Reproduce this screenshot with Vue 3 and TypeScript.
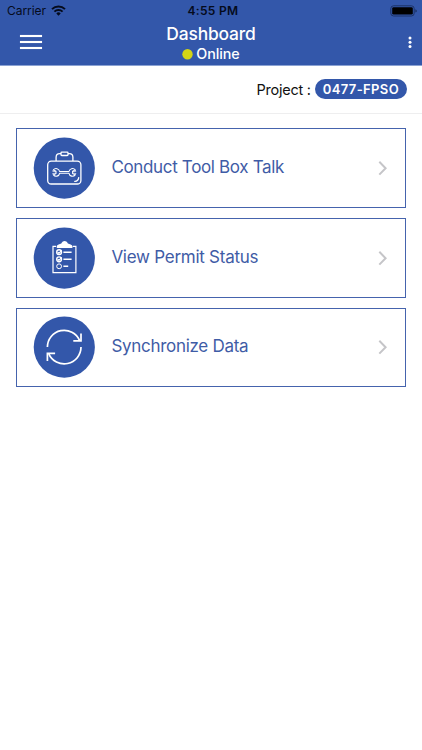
<script setup lang="ts">
interface MenuItem {
  label: string
  icon: 'toolbox' | 'permit' | 'sync'
}

const items: MenuItem[] = [
  { label: 'Conduct Tool Box Talk', icon: 'toolbox' },
  { label: 'View Permit Status', icon: 'permit' },
  { label: 'Synchronize Data', icon: 'sync' },
]
</script>

<template>
  <div class="screen">
    <header class="header">
      <div class="status">
        <div class="carrier">
          <span>Carrier</span>
          <svg class="wifi" width="15" height="11" viewBox="0 0 15 11" fill="none" stroke="#050b1c">
            <path d="M1 4.1a9.3 9.3 0 0 1 13 0" stroke-width="2" />
            <path d="M3.4 6.6a5.9 5.9 0 0 1 8.2 0" stroke-width="1.9" />
            <path d="M5.3 8.4a3.2 3.2 0 0 1 4.4 0L7.5 10.7Z" fill="#050b1c" stroke="none" />
          </svg>
        </div>
        <span class="time">4:55 PM</span>
        <svg class="battery" width="28" height="12" viewBox="0 0 28 12">
          <rect x=".8" y=".8" width="23.4" height="10.2" rx="2.8" fill="none" stroke="#1c3266" stroke-width="1" />
          <rect x="2.2" y="2.2" width="20.6" height="7.4" rx="1.4" fill="#000" />
          <path d="M25.3 4.2q1.6.5 1.6 1.7t-1.6 1.7z" fill="#1c3266" />
        </svg>
      </div>
      <div class="nav">
        <button class="burger" aria-label="Menu"><i /><i /><i /></button>
        <div class="titles">
          <h1>Dashboard</h1>
          <div class="online">
            <svg width="11" height="11" viewBox="0 0 11 11"><circle cx="5.5" cy="5.3" r="5.2" fill="#d4d514" /></svg>
            <span>Online</span>
          </div>
        </div>
        <button class="more" aria-label="More">
          <svg width="4" height="12" viewBox="0 0 4 12" fill="#fff">
            <circle cx="2" cy="1.9" r="1.5" />
            <circle cx="2" cy="6.2" r="1.5" />
            <circle cx="2" cy="10.5" r="1.5" />
          </svg>
        </button>
      </div>
    </header>

    <div class="project">
      <span class="project-label">Project :</span>
      <span class="badge">0477-FPSO</span>
    </div>

    <main class="list">
      <div v-for="item in items" :key="item.icon" class="card">
        <svg class="icon" width="62" height="62" viewBox="0 0 62 62" fill="none" stroke="#fff">
          <circle cx="31.3" cy="31.1" r="30.6" fill="#3357aa" stroke="none" />
          <g v-if="item.icon === 'toolbox'" stroke-width="1.3" stroke-linejoin="round">
            <rect x="14.7" y="24.1" width="33.2" height="22.9" rx="3.6" />
            <path d="M23.1 24.1v-3.8q0-3.6 3.6-3.6h1.4M35 16.7h1.3q3.6 0 3.6 3.6v3.8" />
            <rect x="28" y="15.1" width="7" height="3.4" rx=".8" />
            <path d="M41.8 44.4q3.6-.4 3.9-3.8" stroke-linecap="round" />
            <path d="M20.4 32.9A3.5 3.5 0 0 1 26.6 34.5H36A3.5 3.5 0 0 1 42.2 32.9L39.6 34.2V36.6L42.2 37.9A3.5 3.5 0 0 1 36 36.3H26.6A3.5 3.5 0 0 1 20.4 37.9L23 36.6V34.2Z" stroke-width="1.05" />
            <path d="M20.4 32.9l-.7 1.4 3.3.3M20.4 37.9l-.7-1.4 3.3-.3M42.2 32.9l.7 1.4-3.3.3M42.2 37.9l.7-1.4-3.3-.3" stroke-width=".7" />
          </g>
          <g v-else-if="item.icon === 'permit'" stroke-width="1.2">
            <path d="M23.2 19.3h-3.2v26.3h22.9V19.3H39.7" />
            <path d="M23.8 21v-1.6q0-1.5 1.8-2l2-.6q.9-.3 1.1-1.1.8-1.8 2.9-1.8t2.9 1.8q.2.8 1.1 1.1l2 .6q1.8.5 1.8 2V21z" fill="#fff" stroke="none" />
            <circle cx="26.1" cy="25.2" r="2.4" stroke-width="1.4" />
            <circle cx="26.1" cy="32.3" r="2.4" stroke-width="1.4" />
            <circle cx="26.1" cy="39.3" r="2.4" stroke-width="1" />
            <path d="m24.7 25.1 1.2 1.2 2.8-3M24.7 32.2l1.2 1.2 2.8-3" stroke-width="1.2" />
            <path d="M30.4 25.2h8.2M30.4 32.3h8.2M30.4 39.3h4.8" stroke-width="1.4" />
          </g>
          <g v-else stroke-width="1.7">
            <path d="M14.4 31.1a16.8 16.8 0 0 1 32.2-6.7" />
            <path d="M48 31.1a16.8 16.8 0 0 1-32.2 6.7" />
            <path d="M48 17.4v7.5h-7.7M14.4 44.9v-7.5h7.7" />
          </g>
        </svg>
        <span class="label" :class="item.icon">{{ item.label }}</span>
        <svg class="chevron" width="10" height="16" viewBox="0 0 10 16" fill="none">
          <path d="m1.3 1.8 6.3 6.4-6.3 6.4" stroke="#c5c5c8" stroke-width="2" />
        </svg>
      </div>
    </main>
  </div>
</template>

<style>
body {
  background: #fff;
}
</style>

<style scoped>
.screen {
  width: 422px;
  height: 750px;
  overflow: hidden;
  background: #fff;
  font-family: Inter, "Liberation Sans", sans-serif;
}
.header {
  box-sizing: border-box;
  height: 66px;
  border-bottom: 1px solid #8ba2d3;
  background: #3357aa;
}
.status {
  display: grid;
  grid-template-columns: 1fr auto 1fr;
  align-items: center;
  height: 22px;
  padding: 0 4px 0 7px;
  color: #050b1c;
  font-size: 12px;
  line-height: 22px;
}
.carrier {
  display: flex;
  align-items: center;
  gap: 5px;
  letter-spacing: -0.05px;
}
.wifi {
  margin-top: -1px;
}
.time {
  font-weight: 600;
  letter-spacing: 0.3px;
  padding-left: 1px;
}
.battery {
  justify-self: end;
}
.nav {
  display: grid;
  grid-template-columns: 1fr auto 1fr;
  height: 43px;
}
button {
  display: flex;
  flex-direction: column;
  padding: 0;
  border: 0;
  background: none;
}
.burger {
  gap: 4px;
  margin: 13px 0 0 20px;
}
.burger i {
  width: 22px;
  height: 2px;
  background: #fff;
  box-shadow: 0 0 1px #fff9;
}
.more {
  justify-self: end;
  margin: 14px 10px 0 0;
}
.titles {
  display: flex;
  flex-direction: column;
  align-items: center;
  color: #fff;
}
h1 {
  margin: 0;
  font-size: 17.4px;
  font-weight: 500;
  letter-spacing: -0.15px;
  line-height: 23px;
}
.online {
  display: flex;
  align-items: center;
  gap: 3px;
  font-size: 14.3px;
  font-weight: 500;
  letter-spacing: -0.05px;
  line-height: 18px;
}
.project {
  display: flex;
  align-items: center;
  justify-content: flex-end;
  gap: 4px;
  box-sizing: border-box;
  height: 47.5px;
  padding-right: 14.8px;
  border-bottom: 1px solid #eeeeef;
  color: #111;
  font-size: 14.5px;
}
.project-label {
  letter-spacing: -0.27px;
}
.badge {
  box-sizing: border-box;
  width: 92.6px;
  height: 19.6px;
  border-radius: 10px;
  background: #3357aa;
  color: #fff;
  font-size: 13px;
  font-weight: 600;
  letter-spacing: 0.37px;
  line-height: 20px;
  text-align: center;
}
.list {
  display: grid;
  gap: 9.8px;
  padding: 14.9px 16.5px 0 16.4px;
}
.card {
  display: flex;
  align-items: center;
  box-sizing: border-box;
  height: 79.8px;
  padding: 0 16.5px 0 16px;
  border: 1.3px solid #4563ad;
}
.icon {
  flex: none;
}
.label {
  flex: 1;
  margin: -2px 0 0 16px;
  color: #3f5ca6;
  font-size: 17px;
  line-height: 22px;
  white-space: nowrap;
}
.toolbox {
  letter-spacing: -0.34px;
}
.permit {
  letter-spacing: -0.26px;
}
.sync {
  letter-spacing: -0.29px;
}
.chevron {
  flex: none;
}
</style>
